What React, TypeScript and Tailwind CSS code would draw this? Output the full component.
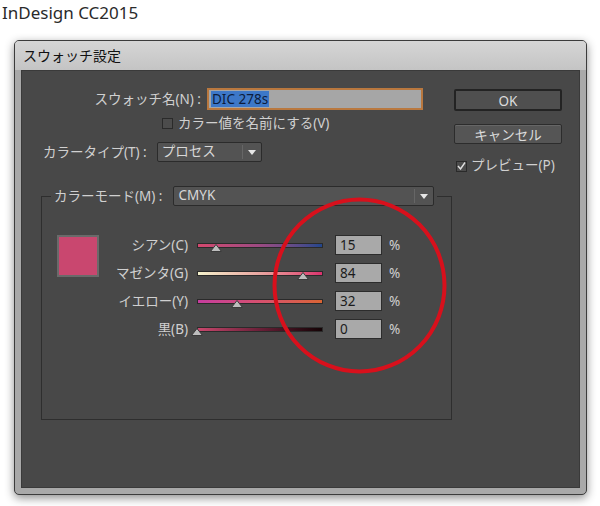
import React from 'react'

const font = { fontFamily: '"Noto Sans", "Noto Sans CJK JP", sans-serif' }

interface ChannelProps {
  label: string
  value: number
  bar: string
}

function Channel({ label, value, bar }: ChannelProps) {
  return (
    <div className="flex items-center h-[20px]">
      <span className="w-[90px] text-right text-[13.5px] text-[#d0d0d0] leading-none whitespace-nowrap">{label}</span>
      <div className="relative ml-[9px] w-[126px] h-[5px]">
        <div className={`w-full h-full border border-[#2a2a2a] ${bar}`} />
        {/* thumb */}
        <svg
          className="absolute top-[1px]"
          style={{ left: `${(value / 100) * 126 - 6}px` }}
          width="12"
          height="8"
          viewBox="0 0 12 8"
        >
          <polygon points="6,0.5 11.5,7.5 0.5,7.5" fill="#bdbdbd" stroke="#3a3a3a" strokeWidth="1" />
        </svg>
      </div>
      <div className="ml-[12px] w-[47px] h-[20px] bg-[#a9a9a9] border border-[#2c2c2c] flex items-center pl-[4px] text-[13.5px] text-[#1c1c1c]">
        {value}
      </div>
      <span className="ml-[7px] text-[13.5px] text-[#d0d0d0]">%</span>
    </div>
  )
}

function Dropdown({ text, width }: { text: string; width: string }) {
  return (
    <div className={`${width} h-[20px] flex items-center bg-[#535353] border border-[#2b2b2b] rounded-[2px]`}>
      <span className="flex-1 pl-[4px] text-[13.5px] text-[#d8d8d8] leading-none">{text}</span>
      <div className="w-px h-[14px] bg-[#3a3a3a] border-r border-[#666]" />
      <span className="w-[18px] flex justify-center">
        <svg width="8" height="5" viewBox="0 0 8 5">
          <polygon points="0,0 8,0 4,5" fill="#e6e6e6" />
        </svg>
      </span>
    </div>
  )
}

export default function App() {
  return (
    <div className="relative w-[600px] h-[506px] bg-white overflow-hidden" style={font}>
      <div className="pl-[2px] pt-[1px] h-[40px] text-[17px] text-[#2a2a2a] leading-[24px]">InDesign CC2015</div>

      {/* dialog */}
      <div className="ml-[14px] w-[573px] h-[455px] rounded-[5px] border border-[#3c3c3c] bg-[#a9a9a9] shadow-[0_3px_10px_rgba(0,0,0,0.45)] flex flex-col">
        <div className="h-[29px] rounded-t-[4px] bg-gradient-to-b from-[#d6d6d6] to-[#c4c4c4] flex items-center pl-[8px] text-[14px] text-[#111]">
          スウォッチ設定
        </div>
        <div className="mx-[6px] mb-[6px] flex-1 bg-[#484848] border border-[#3a3a3a] flex">
          {/* left */}
          <div className="w-[431px]">
            <div className="mt-[17px] flex items-center h-[22px]">
              <span className="w-[179px] text-right text-[13.5px] text-[#d0d0d0] whitespace-nowrap">スウォッチ名(N) :</span>
              <div className="ml-[6px] w-[216px] h-[22px] bg-[#a6a6a6] border-2 border-[#b9783f] flex items-center pl-[2px]">
                <span className="bg-[#3d78c8] text-[#0c1c3c] text-[13.5px] leading-[16px] px-[1px]">DIC 278s</span>
              </div>
            </div>
            <div className="mt-[7px] ml-[140px] flex items-center h-[13px]">
              <div className="w-[11px] h-[11px] border border-[#2a2a2a] bg-[#4c4c4c]" />
              <span className="ml-[5px] text-[13.5px] text-[#d0d0d0] leading-none">カラー値を名前にする(V)</span>
            </div>
            <div className="mt-[12px] ml-[21px] flex items-center h-[20px]">
              <span className="text-[13.5px] text-[#d0d0d0]">カラータイプ(T) :</span>
              <div className="ml-[10px]">
                <Dropdown text="プロセス" width="w-[105px]" />
              </div>
            </div>

            <fieldset className="mt-[24px] ml-[19px] w-[411px] h-[234px] border border-[#2e2e2e]">
              <legend className="ml-[9px] px-[3px]">
                <div className="flex items-center">
                  <span className="text-[13.5px] text-[#d0d0d0]">カラーモード(M) :</span>
                  <div className="ml-[11px]">
                    <Dropdown text="CMYK" width="w-[261px]" />
                  </div>
                </div>
              </legend>
              <div className="flex mt-[29px]">
                <div className="ml-[15px] w-[42px] h-[42px] bg-[#c9476f] border-2 border-[#6a6a6a]" />
                <div className="ml-[-1px] flex flex-col gap-[8px]">
                  <Channel label="シアン(C)" value={15} bar="bg-gradient-to-r from-[#d4486e] via-[#9c4a82] to-[#21468c]" />
                  <Channel label="マゼンタ(G)" value={84} bar="bg-gradient-to-r from-[#f4f2cc] via-[#e8a4a0] to-[#da306e]" />
                  <Channel label="イエロー(Y)" value={32} bar="bg-gradient-to-r from-[#c63c9e] via-[#d6506e] to-[#da6432]" />
                  <Channel label="黒(B)" value={0} bar="bg-gradient-to-r from-[#ca486e] via-[#6a2038] to-[#140406]" />
                </div>
              </div>
            </fieldset>
          </div>

          {/* right */}
          <div className="ml-[1px] w-[108px] flex flex-col">
            <button className="mt-[18px] h-[22px] bg-[#4f4f4f] border-2 border-[#232323] rounded-[2px] text-[13.5px] text-[#dcdcdc]">
              OK
            </button>
            <button className="mt-[13px] h-[20px] bg-[#555] border border-[#2c2c2c] rounded-[2px] text-[13.5px] text-[#dcdcdc] shadow-[inset_0_1px_0_#666]">
              キャンセル
            </button>
            <div className="mt-[15px] ml-[2px] flex items-center h-[14px]">
              <div className="w-[11px] h-[11px] border border-[#2a2a2a] bg-[#4c4c4c] flex items-center justify-center">
                <svg width="9" height="8" viewBox="0 0 9 8">
                  <polyline points="1,4 3.5,7 8,0.5" fill="none" stroke="#e0e0e0" strokeWidth="1.4" />
                </svg>
              </div>
              <span className="ml-[4px] text-[13.5px] text-[#d0d0d0] leading-none">プレビュー(P)</span>
            </div>
          </div>
        </div>
      </div>

      {/* red annotation circle */}
      <svg className="absolute left-0 top-0 pointer-events-none" width="600" height="506">
        <ellipse cx="359.5" cy="285.5" rx="85" ry="86" fill="none" stroke="#d8101c" strokeWidth="4" />
      </svg>
    </div>
  )
}
